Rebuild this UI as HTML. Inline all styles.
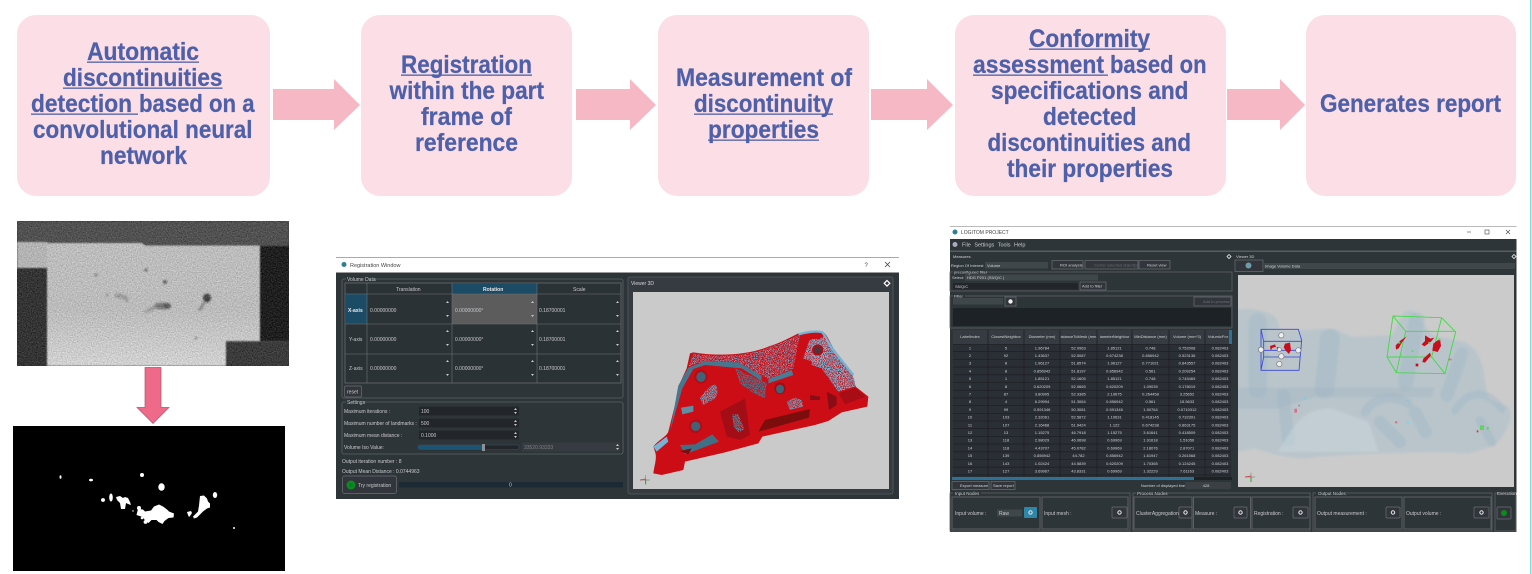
<!DOCTYPE html>
<html><head><meta charset="utf-8"><title>Pipeline</title>
<style>
html,body{margin:0;padding:0;background:#fff;width:1532px;height:574px;overflow:hidden}
svg{display:block}
.h{font:bold 25px "Liberation Sans",sans-serif;fill:#4e60aa;stroke:#4e60aa;stroke-width:.25}
.s{font:5px "Liberation Sans",sans-serif;fill:#c6cacd}
.t{font:4px "Liberation Sans",sans-serif;fill:#cfd3d6;text-anchor:middle}
.b{fill:#31363b;stroke:#6a6f74;stroke-width:.7}
.g{fill:none;stroke:#5b6166;stroke-width:.8}
</style></head><body>
<svg width="1532" height="574" viewBox="0 0 1532 574" xmlns="http://www.w3.org/2000/svg">
<defs>
<filter id="n" x="0" y="0" width="1" height="1" color-interpolation-filters="sRGB">
<feGaussianBlur in="SourceGraphic" stdDeviation=".9" result="b"/>
<feTurbulence type="fractalNoise" baseFrequency=".8" numOctaves="2" seed="4"/>
<feColorMatrix type="matrix" values=".33 .33 .33 0 0 .33 .33 .33 0 0 .33 .33 .33 0 0 0 0 0 0 1" result="m"/>
<feComposite in="b" in2="m" operator="arithmetic" k2="1" k3=".56" k4="-.28"/>
</filter>
<filter id="bl"><feGaussianBlur stdDeviation=".8"/></filter>
<filter id="bx"><feGaussianBlur stdDeviation="3"/></filter>
<filter id="bs"><feGaussianBlur stdDeviation=".35"/></filter>
<filter id="sk" x="0" y="0" width="1" height="1" color-interpolation-filters="sRGB">
<feTurbulence type="fractalNoise" baseFrequency=".4" numOctaves="2" seed="7"/>
<feColorMatrix type="matrix" values="0 0 0 0 0 0 0 0 0 0 0 0 0 0 0 9 0 0 0 -4.500" result="m"/>
<feComposite in="SourceGraphic" in2="m" operator="in"/>
</filter>
<filter id="sk2" x="0" y="0" width="1" height="1" color-interpolation-filters="sRGB">
<feTurbulence type="fractalNoise" baseFrequency=".35" numOctaves="2" seed="12"/>
<feColorMatrix type="matrix" values="0 0 0 0 0 0 0 0 0 0 0 0 0 0 0 9 0 0 0 -3.800" result="m"/>
<feComposite in="SourceGraphic" in2="m" operator="in"/>
</filter>
<clipPath id="c1"><rect x="17" y="221" width="272" height="145"/></clipPath>
<clipPath id="c2"><rect x="1238" y="275" width="276" height="212"/></clipPath>
<linearGradient id="gm" x1="0" y1="0" x2="0" y2="1"><stop offset="0" stop-color="#bdbdbd"/><stop offset=".55" stop-color="#bcbcbc"/><stop offset="1" stop-color="#d2d2d2"/></linearGradient>
</defs>

<rect x="1530" y="0" width="1.5" height="574" fill="#8fd5dc"/>

<!-- boxes -->
<g fill="#fcdfe6">
<rect x="17" y="15" width="253" height="181" rx="19"/>
<rect x="361" y="15" width="211" height="181" rx="19"/>
<rect x="658" y="15" width="211" height="181" rx="19"/>
<rect x="955" y="15" width="271" height="181" rx="19"/>
<rect x="1306" y="15" width="210" height="181" rx="19"/>
</g>
<!-- arrows -->
<g fill="#f5b8c4">
<path d="M273 89H334V79L360 105 334 130V120H273Z"/>
<path d="M576 89H630V79L656 105 630 130V120H576Z"/>
<path d="M871 89H927V79L953 105 927 130V120H871Z"/>
<path d="M1227 89H1280V79L1305 105 1280 130V120H1227Z"/>
</g>
<!-- heading text -->
<g>
<text class="h" x="87" y="60" textLength="112" lengthAdjust="spacingAndGlyphs">Automatic</text>
<text class="h" x="63" y="86" textLength="159.500" lengthAdjust="spacingAndGlyphs">discontinuities</text>
<text class="h" x="31" y="112" textLength="101" lengthAdjust="spacingAndGlyphs">detection</text>
<text class="h" x="139" y="112" textLength="115.500" lengthAdjust="spacingAndGlyphs">based on a</text>
<text class="h" x="33" y="138" textLength="219.500" lengthAdjust="spacingAndGlyphs">convolutional neural</text>
<text class="h" x="100" y="164" textLength="87" lengthAdjust="spacingAndGlyphs">network</text>
<text class="h" x="401" y="73" textLength="131" lengthAdjust="spacingAndGlyphs">Registration</text>
<text class="h" x="389.500" y="99" textLength="154.500" lengthAdjust="spacingAndGlyphs">within the part</text>
<text class="h" x="421" y="125" textLength="91" lengthAdjust="spacingAndGlyphs">frame of</text>
<text class="h" x="415" y="151" textLength="103" lengthAdjust="spacingAndGlyphs">reference</text>
<text class="h" x="676" y="86" textLength="176" lengthAdjust="spacingAndGlyphs">Measurement of</text>
<text class="h" x="694" y="112" textLength="139" lengthAdjust="spacingAndGlyphs">discontinuity</text>
<text class="h" x="708" y="138" textLength="111" lengthAdjust="spacingAndGlyphs">properties</text>
<text class="h" x="1029" y="47" textLength="121" lengthAdjust="spacingAndGlyphs">Conformity</text>
<text class="h" x="973" y="73" textLength="131" lengthAdjust="spacingAndGlyphs">assessment</text>
<text class="h" x="1110" y="73" textLength="96.500" lengthAdjust="spacingAndGlyphs">based on</text>
<text class="h" x="991" y="99" textLength="197.500" lengthAdjust="spacingAndGlyphs">specifications and</text>
<text class="h" x="1043" y="125" textLength="93.500" lengthAdjust="spacingAndGlyphs">detected</text>
<text class="h" x="987.500" y="151" textLength="203.500" lengthAdjust="spacingAndGlyphs">discontinuities and</text>
<text class="h" x="1007" y="177" textLength="166" lengthAdjust="spacingAndGlyphs">their properties</text>
<text class="h" x="1320" y="112" textLength="181" lengthAdjust="spacingAndGlyphs">Generates report</text>
</g>
<g fill="#4e60aa">
<rect x="87" y="61.500" width="112" height="1.300"/>
<rect x="63" y="87.500" width="159.500" height="1.300"/>
<rect x="31" y="113.500" width="107" height="1.300"/>
<rect x="401" y="74.500" width="131" height="1.300"/>
<rect x="694" y="113.500" width="139" height="1.300"/>
<rect x="708" y="139.500" width="111" height="1.300"/>
<rect x="1029" y="48.500" width="121" height="1.300"/>
<rect x="973" y="74.500" width="135" height="1.300"/>
</g>

<!-- X-ray image -->
<g clip-path="url(#c1)"><g filter="url(#n)">
<rect x="17" y="221" width="272" height="145" fill="#525252"/>
<rect x="17" y="268" width="30" height="98" fill="#353535"/>
<rect x="260" y="246" width="29" height="95" fill="#202020"/>
<rect x="226" y="342" width="63" height="24" fill="#3c3c3c"/>
<rect x="17" y="242" width="30" height="26" fill="#b4b4b4"/>
<path d="M47 243H142L145 245.500H260V341H226V366H47Z" fill="url(#gm)"/>
<g filter="url(#bl)">
<circle cx="96" cy="275" r="1.300" fill="#666"/><circle cx="146" cy="270" r="1.500" fill="#666"/><circle cx="165" cy="282" r="2" fill="#5e5e5e"/>
<ellipse cx="207" cy="298" rx="4" ry="4.500" fill="#444"/><path d="M203 302l-3 6-2 1 1 2 3-2 3-6z" fill="#777"/>
<ellipse cx="162" cy="306" rx="8" ry="3.500" fill="#7a7a7a"/><ellipse cx="167" cy="306" rx="4" ry="3" fill="#5c5c5c"/>
<path d="M143 312l10-6 3 3-9 4z" fill="#9a9a9a"/><path d="M114 295l5-2 8 3 2 5-2 2-3-4-8-1z" fill="#9a9a9a"/>
<circle cx="107" cy="295" r="1.200" fill="#808080"/><circle cx="196" cy="338" r="1.300" fill="#808080"/>
</g></g></g>

<!-- pink arrow -->
<path d="M145 367.500H161V407.500H169L153 423.500 137 407.500H145Z" fill="#ef6a89" stroke="#a9566f" stroke-width=".7"/>

<!-- mask image -->
<rect x="13" y="426" width="272" height="145" fill="#000"/>
<g fill="#fff">
<ellipse cx="60.500" cy="477" rx="1" ry="1.800"/><ellipse cx="91" cy="480" rx="2" ry="1.300"/><circle cx="142" cy="475" r="2"/>
<ellipse cx="161.500" cy="487" rx="3.200" ry="3.800"/><ellipse cx="103" cy="500" rx="2" ry="1.900"/><ellipse cx="111" cy="497.500" rx="1.800" ry="4"/>
<path d="M116 497l4-1 3 2 2-1 3 1 2 4 1 3-3-1-2-1-1 6-4 0-1-6-3-3z"/>
<path d="M138 509l5 .5 2 2 6-1 3-4 5-2 4 2 4 3 2 2 5 2-.5 4-5 .5-4 3-2 3-4-2-2-2-5 0-3 3-3-2-3-4-3-1-3-1z"/>
<circle cx="139" cy="508" r="2"/><circle cx="145.500" cy="522" r="1.900"/><circle cx="142" cy="518" r="1.300"/><circle cx="133" cy="511" r=".7"/>
<path d="M200 496l4-.5 3 3 1 3 2 2 0 4-3 1-4 3-6 6-3 1-1-2 5-5 1-6z"/>
<ellipse cx="215" cy="495" rx="2.200" ry="3"/><path d="M187 512l4-1 1 2-2 3-1 1-1-2z"/><circle cx="234" cy="528" r="1"/>
</g>

<!-- Registration window -->
<g filter="url(#bs)">
<rect x="336" y="257" width="563" height="242" fill="#2f3439"/>
<rect x="336" y="258" width="563" height="14" fill="#fff"/>
<rect x="336" y="257" width="563" height="1" fill="#a9a9a9"/><rect x="336" y="272" width="563" height="1" fill="#9a9a9a"/>
<circle cx="344" cy="264.500" r="2.500" fill="#2f7f96"/>
<text x="350" y="267" style="font:5.500px 'Liberation Sans',sans-serif;fill:#444">Registration Window</text>
<text x="864.500" y="267" style="font:6px 'Liberation Sans',sans-serif;fill:#444">?</text>
<path d="M885 262l5 5m0-5l-5 5" stroke="#444" stroke-width=".8"/>
<rect x="342" y="279" width="281" height="119" rx="2" class="g"/>
<rect x="346" y="277" width="28" height="5" fill="#2f3439"/>
<text class="s" x="347" y="281">Volume Data</text>
<rect x="345" y="283" width="276" height="100" fill="#2c3035" stroke="#6e7378" stroke-width=".7"/>
<rect x="452" y="284" width="85" height="10" fill="#1c4b66"/>
<rect x="346" y="294" width="21" height="30" fill="#1c4b66"/>
<rect x="452" y="294" width="85" height="30" fill="#5b5b5b"/>
<g stroke="#6e7378" stroke-width=".6"><path d="M367 283V383M452 283V383M537 283V383M345 294H621M345 324H621M345 354H621"/></g>
<text class="s" x="396" y="291">Translation</text><text class="s" x="483" y="291" style="font-weight:bold;fill:#e5e5e5">Rotation</text><text class="s" x="573" y="291">Scale</text>
<text class="s" x="348" y="312" style="font-weight:bold;fill:#eee">X-axis</text><text class="s" x="349" y="341">Y-axis</text><text class="s" x="349" y="370">Z-axis</text>
<text class="s" x="370" y="312">0.00000000</text><text class="s" x="455" y="312">0.00000000°</text><text class="s" x="539" y="312">0.18700001</text>
<text class="s" x="370" y="341">0.00000000</text><text class="s" x="455" y="341">0.00000000°</text><text class="s" x="539" y="341">0.18700001</text>
<text class="s" x="370" y="370">0.00000000</text><text class="s" x="455" y="370">0.00000000°</text><text class="s" x="539" y="370">0.18700001</text>
<g fill="#c6cacd"><path d="M446 303l1.500-2 1.500 2zM446 315l1.500 2 1.500-2zM531 303l1.500-2 1.500 2zM531 315l1.500 2 1.500-2zM616 303l1.500-2 1.500 2zM616 315l1.500 2 1.500-2zM446 332l1.500-2 1.500 2zM446 344l1.500 2 1.500-2zM531 332l1.500-2 1.500 2zM531 344l1.500 2 1.500-2zM616 332l1.500-2 1.500 2zM616 344l1.500 2 1.500-2zM446 362l1.500-2 1.500 2zM446 374l1.500 2 1.500-2zM531 362l1.500-2 1.500 2zM531 374l1.500 2 1.500-2zM616 362l1.500-2 1.500 2zM616 374l1.500 2 1.500-2z"/></g>
<rect x="344.500" y="386" width="17" height="11" rx="1.500" class="b"/><text class="s" x="347" y="393.500">reset</text>
<rect x="342" y="402" width="281" height="52" rx="2" class="g"/>
<rect x="346" y="400" width="18" height="5" fill="#2f3439"/><text class="s" x="347" y="404">Settings</text>
<text class="s" x="344" y="413">Maximum iterations :</text><text class="s" x="344" y="425">Maximum number of landmarks :</text><text class="s" x="344" y="437">Maximum mean distance :</text><text class="s" x="344" y="449">Volume Iso Value:</text>
<rect x="419" y="406.500" width="100" height="9" fill="#232629"/><rect x="419" y="418.500" width="100" height="9" fill="#232629"/><rect x="419" y="430.500" width="100" height="9" fill="#232629"/>
<text class="s" x="421" y="413">100</text><text class="s" x="421" y="425">500</text><text class="s" x="421" y="437">0.1000</text>
<rect x="418" y="445" width="101" height="4.500" rx="2" fill="#232629" stroke="#3f5a6a" stroke-width=".4"/><rect x="418" y="445" width="66" height="4.500" rx="2" fill="#1d5573"/><rect x="482" y="444" width="3" height="7" fill="#8c9195"/>
<rect x="522" y="442.500" width="98" height="9" fill="#363b40"/><text class="s" x="524" y="449" style="fill:#7c8185">33520.93333</text>
<g fill="#c6cacd"><path d="M514 410l1.500-2 1.500 2zM514 412l1.500 2 1.500-2zM514 422l1.500-2 1.500 2zM514 424l1.500 2 1.500-2zM514 434l1.500-2 1.500 2zM514 436l1.500 2 1.500-2zM616 446l1.500-2 1.500 2zM616 448l1.500 2 1.500-2z"/></g>
<text class="s" x="342" y="463">Output iteration number : 8</text><text class="s" x="342" y="473">Output Mean Distance : 0.0744963</text>
<rect x="342.500" y="476" width="54" height="17.500" rx="2" class="b"/><circle cx="351" cy="485" r="4.500" fill="#0c8a1a"/><path d="M349.500 482.500l4 2.500-4 2.500z" fill="#073"/>
<text class="s" x="358" y="487">Try registration</text>
<rect x="399" y="482" width="224" height="5.500" fill="#1a2a34"/><text class="s" x="509" y="486.500">0</text>
<!-- viewer -->
<rect x="628" y="277" width="265" height="217" rx="2" fill="#363b40" stroke="#565b60" stroke-width=".8"/>
<text class="s" x="631" y="285" style="fill:#d4d7d9">Viewer 3D</text>
<path d="M887 280.500l2.800 2.800-2.800 2.800-2.800-2.800z" fill="none" stroke="#fff" stroke-width="1.200"/>
<rect x="633" y="292" width="256" height="197" fill="#cacaca"/>
<g transform="translate(625 255) scale(.33333)">
<!-- body -->
<path d="M85 655C88 630 97 610 90 590L85 575C100 555 125 545 130 530L150 450 160 395 185 340 195 295 205 292C280 305 370 300 430 275 470 262 500 245 520 235L590 228C605 235 615 262 625 280L680 350 692 395 730 425 727 455 650 472 610 498 570 510 412 545 400 565 300 592 180 620 175 645 110 660Z" fill="#cc0d16"/>
<!-- upper speckled plate -->
<path d="M205 296C280 308 370 303 430 278 470 265 500 248 525 238L505 340 430 372 340 322 240 318 190 335Z" fill="#74b4d4" filter="url(#sk)"/>
<path d="M600 240L690 375V395L640 410 590 340 560 330 560 270Z" fill="#74b4d4" filter="url(#sk2)"/>
<!-- rim -->
<path d="M520 238C540 232 575 226 592 232 606 250 612 268 620 280L685 360" fill="none" stroke="#74b4d4" stroke-width="7"/>
<path d="M535 310L552 258C565 248 590 250 603 264 615 285 610 315 600 330L565 322Z" fill="#7cb8d6" filter="url(#sk2)"/>
<!-- dark band -->
<path d="M160 392L190 338 240 318 340 322 410 362 410 378 350 340 240 330 205 342 172 400 152 470 135 530Z" fill="#47768e"/>
<path d="M330 340L425 385 420 430 385 415 345 385Z" fill="#47768e" filter="url(#sk2)"/>
<path d="M430 372L500 345 505 360 430 385Z" fill="#4a7c95"/>
<!-- face highlights / shadows -->
<path d="M225 430C235 412 258 390 270 388 282 402 280 425 262 435L235 450Z" fill="#6ba5c2" filter="url(#sk2)"/>
<path d="M168 458L205 452 205 470 172 478Z" fill="#5f8da3"/>
<path d="M165 570L210 568 262 538 282 560 180 598Z" fill="#3f6f86"/>
<path d="M165 588L200 580 190 598Z" fill="#7a0a10"/>
<path d="M285 470L360 430 375 540 345 555 305 545Z" fill="#a50b13"/>
<path d="M322 478L340 478 358 522 342 532 326 516Z" fill="#56879f" filter="url(#sk2)"/>
<path d="M485 440L510 428 530 435 535 455 495 465Z" fill="#6ba5c2" filter="url(#sk2)"/>
<path d="M420 495L555 462 552 488 400 530Z" fill="#7c0a10"/>
<path d="M555 420L585 425 585 435 555 435ZM605 410L635 425 635 450 612 465Z" fill="#8a0c12"/>
<path d="M640 415L690 398 722 425 660 448Z" fill="#a80c14"/>
<path d="M85 575L125 545 130 560 95 590Z" fill="#74b4d4"/>
<ellipse cx="228" cy="365" rx="20" ry="21" fill="#b00c14"/><ellipse cx="228" cy="366" rx="14" ry="15" fill="#3f6478"/>
<ellipse cx="212" cy="514" rx="20" ry="20" fill="#b00c14"/><ellipse cx="212" cy="514" rx="14" ry="14" fill="#3f6478"/>
<ellipse cx="465" cy="400" rx="17" ry="18" fill="#a00c14"/><ellipse cx="465" cy="402" rx="12" ry="13" fill="#3f6478"/>
<ellipse cx="578" cy="285" rx="17" ry="17" fill="#b00c14"/><ellipse cx="578" cy="285" rx="11" ry="11" fill="#55323a"/>
<path d="M45 675H75M62 660V688" stroke="#888" stroke-width="2"/><path d="M45 675L62 672" stroke="#d33" stroke-width="2"/><path d="M62 672V688" stroke="#2a2" stroke-width="3"/>
</g>
</g>

<!-- Main app window -->
<g filter="url(#bs)">
<rect x="950" y="226" width="566.500" height="306" fill="#2f3439"/>
<rect x="950" y="226" width="566.500" height="13" fill="#fff"/>
<rect x="950" y="226" width="566.500" height=".8" fill="#a9a9a9"/>
<circle cx="955" cy="232" r="2.500" fill="#2f7f96"/>
<text x="961" y="234" style="font:5px 'Liberation Sans',sans-serif;fill:#444">LOGITOM PROJECT</text>
<path d="M1467 232h4" stroke="#444" stroke-width=".6"/><rect x="1485" y="230" width="4" height="4" fill="none" stroke="#444" stroke-width=".6"/><path d="M1506 230l4 4m0-4l-4 4" stroke="#444" stroke-width=".6"/>
<circle cx="955" cy="244.500" r="2.500" fill="#aab"/>
<text class="s" x="962" y="246.500" style="font-size:5.500px;word-spacing:2px">File Settings Tools Help</text>
<rect x="950" y="250.500" width="566.500" height="1.500" fill="#565b60"/>
<text class="t" x="953" y="258" style="text-anchor:start">Measures</text>
<path d="M1229 254.500l2 2-2 2-2-2z" fill="none" stroke="#eee" stroke-width=".8"/><path d="M1514 254.500l2 2-2 2-2-2z" fill="none" stroke="#eee" stroke-width=".8"/>
<text class="t" x="951" y="267" style="text-anchor:start">Region Of Interest</text>
<rect x="985" y="262" width="63" height="6.500" fill="#41464b"/><text class="t" x="987" y="267" style="text-anchor:start">Volume</text>
<rect x="1052" y="260.500" width="31" height="8.500" class="b"/><text class="t" x="1060" y="266.500" style="text-anchor:start">ROI analysis</text>
<rect x="1085" y="260.500" width="53" height="8.500" class="b"/><text class="t" x="1094" y="266.500" style="text-anchor:start;fill:#6c7175">Center selected object(s)</text>
<rect x="1139" y="260.500" width="31" height="8.500" class="b"/><text class="t" x="1147" y="266.500" style="text-anchor:start">Reset view</text>
<rect x="950" y="272" width="282" height="19" class="g"/>
<rect x="953" y="270" width="33" height="4" fill="#2f3439"/><text class="t" x="954" y="273.500" style="text-anchor:start">preconfigured filter</text>
<text class="t" x="952" y="279" style="text-anchor:start">Select:</text>
<rect x="965" y="274.500" width="133" height="6" fill="#41464b"/><text class="t" x="967" y="279" style="text-anchor:start">HDG P201 (S5/Q/C )</text>
<rect x="953" y="283" width="125" height="6.500" fill="#232629"/><text class="t" x="955" y="288" style="text-anchor:start">S5/Q/C</text>
<rect x="1080" y="282" width="26" height="8" class="b"/><text class="t" x="1082" y="287.500" style="text-anchor:start">Add to filter</text>
<rect x="950" y="296" width="282" height="32" class="g"/>
<rect x="953" y="294" width="12" height="4" fill="#2f3439"/><text class="t" x="954" y="297.500" style="text-anchor:start">Filter</text>
<rect x="953" y="298" width="50" height="6.500" fill="#41464b"/>
<rect x="1005" y="297" width="11" height="9" class="b"/><circle cx="1010.500" cy="301.500" r="2.200" fill="#eee"/>
<rect x="1194" y="297" width="37" height="9" class="b"/><text class="t" x="1203" y="303" style="text-anchor:start;fill:#6c7175">Add to process</text>
<rect x="953" y="308" width="278" height="18" fill="#1e2225"/>
<rect x="953" y="330" width="278" height="147" fill="#2b2f34"/>
<rect x="953" y="330" width="278" height="14" fill="#363b40"/>
<g stroke="#1a1d20" stroke-width=".6">
<path d="M988 330V477M1024 330V477M1060 330V477M1097 330V477M1132 330V477M1169 330V477M1205 330V477"/>
<path d="M953 344.500H1231M953 351.700H1231M953 359.400H1231M953 367.100H1231M953 374.800H1231M953 382.500H1231M953 390.200H1231M953 397.900H1231M953 405.600H1231M953 413.300H1231M953 421H1231M953 428.700H1231M953 436.400H1231M953 444.100H1231M953 451.800H1231M953 459.500H1231M953 467.200H1231M953 474.900H1231"/>
</g>
<rect x="1229" y="330" width="3" height="14" fill="#2f7197"/>
<g class="t">
<text class="t" x="970" y="338">LabelIndex</text><text class="t" x="1006" y="338">ClosestNeighbor</text><text class="t" x="1042" y="338">Diameter (mm)</text><text class="t" x="1078.500" y="338">istanceToMesh (mm</text><text class="t" x="1114.500" y="338">iameterNeighbor</text><text class="t" x="1150.500" y="338">MinDistance (mm)</text><text class="t" x="1187" y="338">Volume (mm^3)</text><text class="t" x="1218" y="338">VolumicPor</text>
<text class="t" x="970" y="349.500">1</text><text class="t" x="1006" y="349.500">5</text><text class="t" x="1042" y="349.500">1.96784</text><text class="t" x="1078.500" y="349.500">52.0963</text><text class="t" x="1114.500" y="349.500">1.85121</text><text class="t" x="1150.500" y="349.500">0.748</text><text class="t" x="1187" y="349.500">0.752008</text><text class="t" x="1220" y="349.500">0.082403</text>
<text class="t" x="970" y="357">2</text><text class="t" x="1006" y="357">92</text><text class="t" x="1042" y="357">1.43637</text><text class="t" x="1078.500" y="357">52.5087</text><text class="t" x="1114.500" y="357">0.674238</text><text class="t" x="1150.500" y="357">0.856942</text><text class="t" x="1187" y="357">0.523136</text><text class="t" x="1220" y="357">0.082403</text>
<text class="t" x="970" y="364.700">3</text><text class="t" x="1006" y="364.700">8</text><text class="t" x="1042" y="364.700">1.96127</text><text class="t" x="1078.500" y="364.700">51.8574</text><text class="t" x="1114.500" y="364.700">1.96127</text><text class="t" x="1150.500" y="364.700">0.771021</text><text class="t" x="1187" y="364.700">0.843557</text><text class="t" x="1220" y="364.700">0.082403</text>
<text class="t" x="970" y="372.400">4</text><text class="t" x="1006" y="372.400">8</text><text class="t" x="1042" y="372.400">0.856942</text><text class="t" x="1078.500" y="372.400">51.8197</text><text class="t" x="1114.500" y="372.400">0.856942</text><text class="t" x="1150.500" y="372.400">0.561</text><text class="t" x="1187" y="372.400">0.209254</text><text class="t" x="1220" y="372.400">0.082403</text>
<text class="t" x="970" y="380.100">5</text><text class="t" x="1006" y="380.100">1</text><text class="t" x="1042" y="380.100">1.85121</text><text class="t" x="1078.500" y="380.100">52.1605</text><text class="t" x="1114.500" y="380.100">1.85121</text><text class="t" x="1150.500" y="380.100">0.748</text><text class="t" x="1187" y="380.100">0.745469</text><text class="t" x="1220" y="380.100">0.082403</text>
<text class="t" x="970" y="387.800">6</text><text class="t" x="1006" y="387.800">8</text><text class="t" x="1042" y="387.800">0.620209</text><text class="t" x="1078.500" y="387.800">52.0665</text><text class="t" x="1114.500" y="387.800">0.620209</text><text class="t" x="1150.500" y="387.800">1.09039</text><text class="t" x="1187" y="387.800">0.178019</text><text class="t" x="1220" y="387.800">0.082403</text>
<text class="t" x="970" y="395.500">7</text><text class="t" x="1006" y="395.500">87</text><text class="t" x="1042" y="395.500">3.80905</text><text class="t" x="1078.500" y="395.500">52.3385</text><text class="t" x="1114.500" y="395.500">2.19675</text><text class="t" x="1150.500" y="395.500">0.264458</text><text class="t" x="1187" y="395.500">3.25652</text><text class="t" x="1220" y="395.500">0.082403</text>
<text class="t" x="970" y="403.200">8</text><text class="t" x="1006" y="403.200">4</text><text class="t" x="1042" y="403.200">6.29994</text><text class="t" x="1078.500" y="403.200">51.3064</text><text class="t" x="1114.500" y="403.200">0.856942</text><text class="t" x="1150.500" y="403.200">0.561</text><text class="t" x="1187" y="403.200">15.5633</text><text class="t" x="1220" y="403.200">0.082403</text>
<text class="t" x="970" y="410.900">9</text><text class="t" x="1006" y="410.900">99</text><text class="t" x="1042" y="410.900">0.591346</text><text class="t" x="1078.500" y="410.900">50.3081</text><text class="t" x="1114.500" y="410.900">0.591346</text><text class="t" x="1150.500" y="410.900">1.50764</text><text class="t" x="1187" y="410.900">0.0719312</text><text class="t" x="1220" y="410.900">0.082403</text>
<text class="t" x="970" y="418.600">10</text><text class="t" x="1006" y="418.600">103</text><text class="t" x="1042" y="418.600">2.32061</text><text class="t" x="1078.500" y="418.600">52.5872</text><text class="t" x="1114.500" y="418.600">1.10631</text><text class="t" x="1150.500" y="418.600">0.418145</text><text class="t" x="1187" y="418.600">0.732391</text><text class="t" x="1220" y="418.600">0.082403</text>
<text class="t" x="970" y="426.300">11</text><text class="t" x="1006" y="426.300">107</text><text class="t" x="1042" y="426.300">2.16468</text><text class="t" x="1078.500" y="426.300">51.9424</text><text class="t" x="1114.500" y="426.300">1.122</text><text class="t" x="1150.500" y="426.300">0.674238</text><text class="t" x="1187" y="426.300">0.863175</text><text class="t" x="1220" y="426.300">0.082403</text>
<text class="t" x="970" y="434">12</text><text class="t" x="1006" y="434">13</text><text class="t" x="1042" y="434">1.15275</text><text class="t" x="1078.500" y="434">46.7918</text><text class="t" x="1114.500" y="434">1.15275</text><text class="t" x="1150.500" y="434">3.61641</text><text class="t" x="1187" y="434">0.418509</text><text class="t" x="1220" y="434">0.082403</text>
<text class="t" x="970" y="441.700">13</text><text class="t" x="1006" y="441.700">118</text><text class="t" x="1042" y="441.700">2.98029</text><text class="t" x="1078.500" y="441.700">46.0698</text><text class="t" x="1114.500" y="441.700">0.69969</text><text class="t" x="1150.500" y="441.700">1.91618</text><text class="t" x="1187" y="441.700">1.51056</text><text class="t" x="1220" y="441.700">0.082403</text>
<text class="t" x="970" y="449.400">14</text><text class="t" x="1006" y="449.400">118</text><text class="t" x="1042" y="449.400">4.43707</text><text class="t" x="1078.500" y="449.400">45.0782</text><text class="t" x="1114.500" y="449.400">0.69969</text><text class="t" x="1150.500" y="449.400">2.18076</text><text class="t" x="1187" y="449.400">2.87071</text><text class="t" x="1220" y="449.400">0.082403</text>
<text class="t" x="970" y="457.100">15</text><text class="t" x="1006" y="457.100">139</text><text class="t" x="1042" y="457.100">0.856942</text><text class="t" x="1078.500" y="457.100">44.782</text><text class="t" x="1114.500" y="457.100">0.856942</text><text class="t" x="1150.500" y="457.100">1.61947</text><text class="t" x="1187" y="457.100">0.261568</text><text class="t" x="1220" y="457.100">0.082403</text>
<text class="t" x="970" y="464.800">16</text><text class="t" x="1006" y="464.800">143</text><text class="t" x="1042" y="464.800">1.02424</text><text class="t" x="1078.500" y="464.800">44.5839</text><text class="t" x="1114.500" y="464.800">0.620209</text><text class="t" x="1150.500" y="464.800">1.70365</text><text class="t" x="1187" y="464.800">0.124245</text><text class="t" x="1220" y="464.800">0.082403</text>
<text class="t" x="970" y="472.500">17</text><text class="t" x="1006" y="472.500">127</text><text class="t" x="1042" y="472.500">3.69967</text><text class="t" x="1078.500" y="472.500">43.8331</text><text class="t" x="1114.500" y="472.500">0.69969</text><text class="t" x="1150.500" y="472.500">1.32229</text><text class="t" x="1187" y="472.500">7.61163</text><text class="t" x="1220" y="472.500">0.082403</text>
</g>
<rect x="952" y="477" width="280" height="3" fill="#1c2023"/><rect x="952" y="477" width="242" height="3" fill="#2f7197"/>
<rect x="952" y="481.500" width="37" height="8" class="b"/><text class="t" x="960" y="487" style="text-anchor:start">Export measure</text>
<rect x="991" y="481.500" width="24" height="8" class="b"/><text class="t" x="993" y="487" style="text-anchor:start">Save report</text>
<text class="t" x="1141" y="487" style="text-anchor:start">Number of displayed lines:</text>
<rect x="1185" y="482" width="46" height="7" fill="#3a3f44"/><text class="t" x="1206" y="487">428</text>
<!-- viewer header -->
<text class="t" x="1236" y="258" style="text-anchor:start">Viewer 3D</text>
<rect x="1235" y="260" width="28" height="11.500" class="b"/><circle cx="1248.500" cy="265.500" r="3" fill="#6f9aa8"/>
<rect x="1263" y="263" width="252" height="6" fill="#41464b"/><text class="t" x="1265" y="267.500" style="text-anchor:start">Image Volume Data</text>
<rect x="1238" y="275" width="276" height="212" fill="#cbcbcb"/>
<g clip-path="url(#c2)"><g transform="translate(1235 222) scale(.33333)">
<g filter="url(#bx)">
<path d="M0 265C30 255 100 262 125 290L135 322C180 330 260 315 300 322L350 345 470 340 505 275C515 262 535 262 545 275L590 340 690 360C720 375 745 410 750 480L760 530 820 555C835 580 825 620 780 670L700 695 600 690 430 695 300 700 200 710 130 700 60 680 0 690Z" fill="#afc1cc" fill-opacity=".62"/>
<path d="M0 497H600L590 525H240L130 560 0 560Z" fill="#9fb3c0" fill-opacity=".35"/>
<g fill="none" stroke="#9fb6c4" stroke-opacity=".38" stroke-linecap="round">
<path d="M68 300V500" stroke-width="55"/><path d="M285 350L268 500" stroke-width="60"/><path d="M545 295L512 480" stroke-width="48"/><path d="M680 395L635 520" stroke-width="40"/>
<path d="M145 520L160 655" stroke-width="38"/><path d="M435 600L495 660" stroke-width="38"/><path d="M540 570L572 630" stroke-width="38"/><path d="M735 595L770 660" stroke-width="28"/>
<path d="M390 570C420 520 480 520 520 545" stroke-width="28"/><path d="M660 565C700 500 760 505 800 560" stroke-width="24"/>
</g>
<path d="M130 690C190 575 230 560 290 560L400 600 430 690Z" fill="#d2dce0" fill-opacity=".4"/>
</g>
<g fill="none" stroke="#3b46d8" stroke-width="2.500"><path d="M78 322H190L200 355 192 445H78ZM78 322L86 358H200M86 358V405H195M78 445L86 405M78 385H190"/></g>
<g fill="#c8101a"><path d="M105 372l15-5 3 8-10 2-6 8zM150 365l15-3 3 22-6 12-8-8-8-12z"/><circle cx="128" cy="378" r="3"/></g>
<g fill="#eee" stroke="#777" stroke-width="2"><circle cx="139" cy="340" r="8"/><circle cx="78" cy="383" r="8"/><circle cx="190" cy="385" r="8"/><circle cx="139" cy="403" r="8"/><circle cx="133" cy="426" r="8"/><circle cx="133" cy="383" r="6"/></g>
<g fill="none" stroke="#45d84a" stroke-width="2.800"><path d="M474 282L620 287 662 330 630 455 484 452 456 405ZM474 282L512 328H662M512 328L484 452M620 287L590 405H456M590 405L630 455"/></g>
<g fill="#c8101a"><path d="M570 340l16 10 12-3-10 12-20 14-8-6 10-10zM595 365l20-15 3 22-10 18-16-4zM565 410l20-18 3 8-18 22-8-2zM482 370l15-15 18-12-14 18-10 18-8 4zM542 425h8v8h-8z"/></g>
<g fill="#5fd35f"><rect x="490" y="360" width="6" height="5"/><rect x="530" y="385" width="5" height="5"/><rect x="495" y="395" width="5" height="5"/><rect x="610" y="350" width="6" height="5"/><rect x="580" y="360" width="6" height="5"/><rect x="95" y="400" width="5" height="4"/><rect x="735" y="610" width="12" height="14"/><rect x="755" y="615" width="6" height="8"/></g>
<g fill="#d8708c"><rect x="178" y="560" width="8" height="12"/><rect x="190" y="548" width="5" height="5"/><rect x="480" y="598" width="7" height="6"/><rect x="725" y="625" width="5" height="6" fill="#d03a3a"/><rect x="640" y="410" width="10" height="5"/></g>
<g fill="#7cd"><rect x="205" y="528" width="7" height="5"/><rect x="515" y="600" width="8" height="3"/><rect x="515" y="535" width="6" height="3"/></g>
<path d="M30 765H60M48 752V780" stroke="#888" stroke-width="2"/><path d="M30 765L48 762" stroke="#d33" stroke-width="2"/><path d="M48 765V780" stroke="#2a2" stroke-width="3"/>
</g></g>
<!-- bottom nodes -->
<rect x="950" y="493" width="180" height="38" class="g"/><rect x="1133" y="493" width="177" height="38" class="g"/><rect x="1313" y="493" width="179" height="38" class="g"/><rect x="1495" y="493" width="21" height="38" class="g"/>
<rect x="953" y="491" width="28" height="4" fill="#2f3439"/><rect x="1136" y="491" width="30" height="4" fill="#2f3439"/><rect x="1316" y="491" width="30" height="4" fill="#2f3439"/>
<text class="s" x="955" y="495" style="font-size:4.500px">Input Nodes</text><text class="s" x="1137" y="495" style="font-size:4.500px">Process Nodes</text><text class="s" x="1318" y="495" style="font-size:4.500px">Output Nodes</text><text class="s" x="1497" y="495" style="font-size:4.500px">Execution</text>
<g fill="none" stroke="#5b6166" stroke-width="1"><rect x="952" y="497" width="88" height="32"/><rect x="1042" y="497" width="86" height="32"/><rect x="1134" y="497" width="58" height="32"/><rect x="1193.500" y="497" width="57" height="32"/><rect x="1252" y="497" width="58" height="32"/><rect x="1315" y="497" width="87" height="32"/><rect x="1404" y="497" width="87" height="32"/></g>
<text class="s" x="955" y="515">Input volume :</text><text class="s" x="1044" y="515">Input mesh :</text><text class="s" x="1136" y="515">ClusterAggregation :</text><text class="s" x="1195" y="515">Measure :</text><text class="s" x="1254" y="515">Registration :</text><text class="s" x="1317" y="515">Output measurement :</text><text class="s" x="1406" y="515">Output volume :</text>
<rect x="997" y="509.500" width="25" height="7" fill="#41464b"/><text class="s" x="999" y="515">Raw</text>
<rect x="1024" y="507" width="13" height="11" fill="#2f86a8" rx="1"/>
<rect class="b" x="1112" y="507" width="15" height="11" rx="1"/><rect class="b" x="1179" y="507" width="13" height="11" rx="1"/><rect class="b" x="1234" y="507" width="13" height="11" rx="1"/><rect class="b" x="1293" y="507" width="15" height="11" rx="1"/><rect class="b" x="1386" y="507" width="14" height="11" rx="1"/><rect class="b" x="1474" y="507" width="15" height="11" rx="1"/><rect class="b" x="1497" y="507" width="14" height="12" rx="1"/>
<g fill="none" stroke="#e2e4e6" stroke-width="1"><circle cx="1030.500" cy="512.500" r="1.700"/><circle cx="1119.500" cy="512.500" r="1.700"/><circle cx="1185.500" cy="512.500" r="1.700"/><circle cx="1240.500" cy="512.500" r="1.700"/><circle cx="1300.500" cy="512.500" r="1.700"/><circle cx="1393" cy="512.500" r="1.700"/><circle cx="1481.500" cy="512.500" r="1.700"/></g>
<circle cx="1504" cy="513" r="3" fill="#0c8a1a"/>
</g>
</svg>
</body></html>
